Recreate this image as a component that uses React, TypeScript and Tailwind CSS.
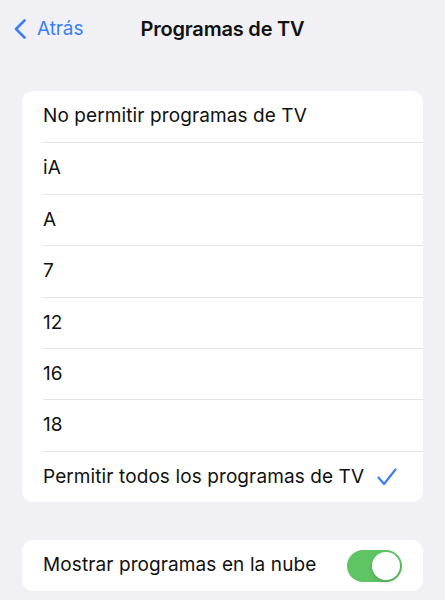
import React, { useState } from "react";

const options = [
  "No permitir programas de TV",
  "iA",
  "A",
  "7",
  "12",
  "16",
  "18",
  "Permitir todos los programas de TV",
];

export default function App() {
  const [selected, setSelected] = useState(options.length - 1);
  const [cloud, setCloud] = useState(true);

  return (
    <div className="min-h-[600px] w-[445px] bg-[#f0f0f5] font-['Inter','Noto_Sans',sans-serif] text-[#111]">
      {/* nav bar */}
      <div className="relative flex h-[58px] items-center">
        <button className="flex items-center gap-[11px] pl-[14px] text-[#3a7ff6]">
          <svg width="12" height="20" viewBox="0 0 12 20" fill="none">
            <path
              d="M10.5 1.5 2 10l8.5 8.5"
              stroke="currentColor"
              strokeWidth="2.6"
              strokeLinecap="round"
              strokeLinejoin="round"
            />
          </svg>
          <span className="text-[19px] tracking-[-0.1px]">Atrás</span>
        </button>
        <h1 className="absolute left-1/2 -translate-x-1/2 text-[20px] font-semibold tracking-[-0.2px]">
          Programas de TV
        </h1>
      </div>

      {/* ratings list */}
      <div className="mx-[22px] mt-[33px] overflow-hidden rounded-[11px] bg-white">
        {options.map((label, i) => (
          <button
            key={label}
            onClick={() => setSelected(i)}
            className="flex h-[51.4px] w-full items-stretch pl-[21px] text-left"
          >
            <div
              className={
                "flex flex-1 items-center justify-between pr-[26px] " +
                (i > 0 ? "border-t border-[#e3e3e8]" : "")
              }
            >
              <span className="text-[19px] tracking-[0.1px]">{label}</span>
              {selected === i && (
                <svg width="20" height="18" viewBox="0 0 20 18" fill="none">
                  <path
                    d="M1.5 9.5 7 16 18.5 1.5"
                    stroke="#3a7ff6"
                    strokeWidth="2.2"
                    strokeLinecap="round"
                    strokeLinejoin="round"
                  />
                </svg>
              )}
            </div>
          </button>
        ))}
      </div>

      {/* cloud toggle */}
      <div className="mx-[22px] mt-[38px] flex h-[51px] items-center justify-between rounded-[11px] bg-white pl-[21px] pr-[21px]">
        <span className="text-[19px] tracking-[0.1px]">Mostrar programas en la nube</span>
        <button
          onClick={() => setCloud((c) => !c)}
          className={
            "flex h-[32px] w-[55px] items-center rounded-full p-[2px] " +
            (cloud ? "justify-end bg-[#5fc463]" : "justify-start bg-[#e5e5ea]")
          }
        >
          <span className="h-[28px] w-[28px] rounded-full bg-white shadow-[0_2px_4px_rgba(0,0,0,0.18)]" />
        </button>
      </div>
    </div>
  );
}
